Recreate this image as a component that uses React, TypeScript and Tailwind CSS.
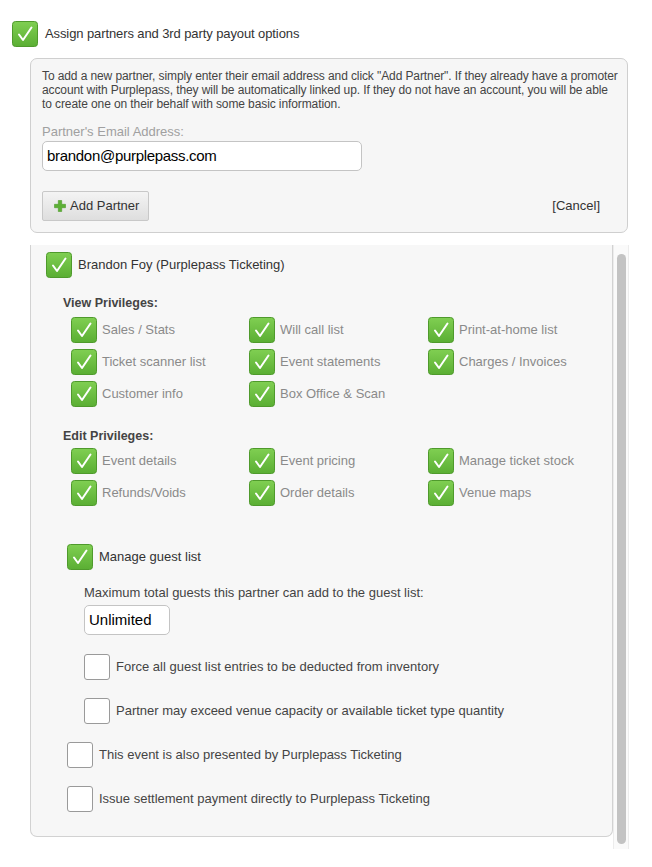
import React from "react";

function GreenCheck() {
  return (
    <svg width="26" height="26" viewBox="0 0 26 26" className="shrink-0">
      <defs>
        <linearGradient id="gc" x1="0" y1="0" x2="0" y2="1">
          <stop offset="0" stopColor="#80cf52" />
          <stop offset="1" stopColor="#5aae33" />
        </linearGradient>
      </defs>
      <rect x="0.5" y="0.5" width="25" height="25" rx="3" fill="url(#gc)" stroke="#4f9a2c" />
      <path d="M7 13.5 L11 19 L19.5 6.5" fill="none" stroke="#fff" strokeWidth="2" strokeLinecap="round" strokeLinejoin="round" />
    </svg>
  );
}

function EmptyBox() {
  return <div className="w-[26px] h-[26px] shrink-0 rounded-[3px] border border-[#9a9a9a] bg-white" />;
}

const viewPrivileges = [
  "Sales / Stats",
  "Will call list",
  "Print-at-home list",
  "Ticket scanner list",
  "Event statements",
  "Charges / Invoices",
  "Customer info",
  "Box Office & Scan",
];

const editPrivileges = [
  "Event details",
  "Event pricing",
  "Manage ticket stock",
  "Refunds/Voids",
  "Order details",
  "Venue maps",
];

function PrivilegeGrid({ items }: { items: string[] }) {
  return (
    <div className="grid grid-cols-[178px_179px_178px] gap-y-[6px] pl-[40px]">
      {items.map((label) => (
        <div key={label} className="flex items-center gap-[5px] h-[26px]">
          <GreenCheck />
          <span className="text-[13px] text-[#8a8a8a]">{label}</span>
        </div>
      ))}
    </div>
  );
}

export default function App() {
  return (
    <div className="min-h-screen bg-white pt-[21px] pl-[12px] font-['Liberation_Sans',Arial,sans-serif]">
      {/* header toggle */}
      <div className="flex items-center gap-[7px]">
        <GreenCheck />
        <span className="text-[13px] text-[#333] tracking-[-0.1px]">Assign partners and 3rd party payout options</span>
      </div>

      {/* add partner box */}
      <div className="ml-[18px] mt-[11px] w-[598px] rounded-[7px] border border-[#cfcfcf] bg-[#f6f6f6] pl-[11px] pr-[6px] pt-[10px] pb-[11px]">
        <p className="whitespace-nowrap text-[12px] leading-[14px] text-[#444] tracking-[-0.1px]">
          To add a new partner, simply enter their email address and click "Add Partner". If they already have a promoter
          <br />
          account with Purplepass, they will be automatically linked up. If they do not have an account, you will be able
          <br />
          to create one on their behalf with some basic information.
        </p>
        <div className="mt-[13px] text-[13px] leading-[15px] text-[#a0a0a0]">Partner's Email Address:</div>
        <div className="mt-[2px] w-[320px] h-[30px] rounded-[5px] border border-[#c4c4c4] bg-white flex items-center px-[4px] text-[15px] tracking-[-0.3px] text-black">
          brandon@purplepass.com
        </div>
        <div className="mt-[20px] pr-[21px] flex items-center justify-between">
          <button className="w-[107px] h-[30px] rounded-[2px] border border-[#c8c8c8] bg-gradient-to-b from-[#f4f4f4] to-[#dedede] flex items-center gap-[4px] pl-[11px] text-[13px] text-[#333]">
            <svg width="12" height="12" viewBox="0 0 12 12">
              <path d="M4.3 0.5h3.4v3.8h3.8v3.4H7.7v3.8H4.3V7.7H0.5V4.3h3.8z" fill="#5cb035" stroke="#4e9a2a" strokeWidth="0.6" strokeLinejoin="round" />
            </svg>
            Add Partner
          </button>
          <span className="text-[13px] text-[#333]">[Cancel]</span>
        </div>
      </div>

      {/* partner panel with scrollbar */}
      <div className="ml-[18px] mt-[12px] flex">
        <div className="w-[583px] h-[592px] border-x border-b border-[#d2d2d2] rounded-b-[7px] bg-[#f7f7f7] pt-[7px] pl-[15px]">
          <div className="flex items-center gap-[6px]">
            <GreenCheck />
            <span className="text-[13px] text-[#333]">Brandon Foy (Purplepass Ticketing)</span>
          </div>

          <div className="mt-[18px] pl-[17px] text-[12.5px] font-bold text-[#444] leading-[14px]">View Privileges:</div>
          <div className="mt-[7px] -ml-[15px]">
            <PrivilegeGrid items={viewPrivileges} />
          </div>

          <div className="mt-[22px] pl-[17px] text-[12.5px] font-bold text-[#444] leading-[14px]">Edit Privileges:</div>
          <div className="mt-[5px] -ml-[15px]">
            <PrivilegeGrid items={editPrivileges} />
          </div>

          <div className="mt-[38px] pl-[21px] flex items-center gap-[6px]">
            <GreenCheck />
            <span className="text-[13px] text-[#333]">Manage guest list</span>
          </div>

          <div className="mt-[15px] pl-[38px] text-[13px] leading-[15px] text-[#444]">
            Maximum total guests this partner can add to the guest list:
          </div>
          <div className="ml-[38px] mt-[5px] w-[86px] h-[30px] rounded-[5px] border border-[#c4c4c4] bg-white flex items-center px-[4px] text-[15px] text-black">
            Unlimited
          </div>

          <div className="mt-[19px] pl-[38px] flex items-center gap-[6px]">
            <EmptyBox />
            <span className="text-[13px] text-[#444]">Force all guest list entries to be deducted from inventory</span>
          </div>
          <div className="mt-[18px] pl-[38px] flex items-center gap-[6px]">
            <EmptyBox />
            <span className="text-[13px] text-[#444]">Partner may exceed venue capacity or available ticket type quantity</span>
          </div>
          <div className="mt-[18px] pl-[21px] flex items-center gap-[6px]">
            <EmptyBox />
            <span className="text-[13px] text-[#444]">This event is also presented by Purplepass Ticketing</span>
          </div>
          <div className="mt-[18px] pl-[21px] flex items-center gap-[6px]">
            <EmptyBox />
            <span className="text-[13px] text-[#444]">Issue settlement payment directly to Purplepass Ticketing</span>
          </div>
        </div>

        {/* scrollbar */}
        <div className="w-[16px] h-[604px] border-x border-[#ececec] bg-[#fafafa] pt-[9px] flex justify-center">
          <div className="w-[9px] h-[590px] rounded-full bg-[#c3c3c3]" />
        </div>
      </div>
    </div>
  );
}
